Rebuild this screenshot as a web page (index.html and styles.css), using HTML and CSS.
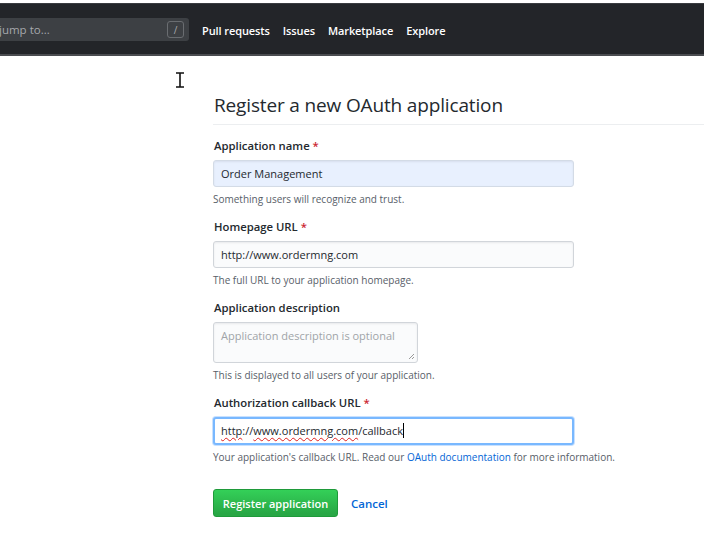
FILE: index.html
```html
<!DOCTYPE html>
<html lang="en">
<head>
<meta charset="utf-8">
<title>Register a new OAuth application</title>
<link rel="stylesheet" href="styles.css">
</head>
<body>
<header class="topbar">
  <div class="search">
    <span class="search-text">jump to...</span>
    <span class="slash">/</span>
  </div>
  <nav class="nav">
    <a class="nav-link">Pull requests</a>
    <a class="nav-link">Issues</a>
    <a class="nav-link">Marketplace</a>
    <a class="nav-link">Explore</a>
  </nav>
</header>

<svg class="ibeam" width="10" height="16" viewBox="0 0 10 16" aria-hidden="true">
  <path d="M1 1h8M5 1v14M1 15h8" stroke="#111" stroke-width="1.6" fill="none"/>
</svg>

<main class="page">
  <h1 class="title">Register a new OAuth application</h1>

  <div class="group">
    <label class="label">Application name <span class="req">*</span></label>
    <div class="field autofill">Order Management</div>
    <p class="note">Something users will recognize and trust.</p>
  </div>

  <div class="group">
    <label class="label">Homepage URL <span class="req">*</span></label>
    <div class="field">http://www.ordermng.com</div>
    <p class="note">The full URL to your application homepage.</p>
  </div>

  <div class="group">
    <label class="label">Application description</label>
    <div class="textarea"><span class="placeholder">Application description is optional</span>
      <svg class="grip" width="7" height="7" viewBox="0 0 7 7"><path d="M6 1L1 6M6 4L4 6" stroke="#999" stroke-width="1"/></svg>
    </div>
    <p class="note">This is displayed to all users of your application.</p>
  </div>

  <div class="group">
    <label class="label">Authorization callback URL <span class="req">*</span></label>
    <div class="field focus"><span class="spell">http</span>://<span class="spell">www.ordermng.com</span>/callback<span class="caret"></span></div>
    <p class="note">Your application's callback URL. Read our <a class="link">OAuth documentation</a> for more information.</p>
  </div>

  <div class="actions">
    <button class="btn">Register application</button>
    <a class="cancel">Cancel</a>
  </div>
</main>
</body>
</html>
```

FILE: styles.css
```css
* { box-sizing: border-box; }
html, body { margin: 0; padding: 0; background: #fff; }
body {
  font-family: "Open Sans", "Noto Sans", sans-serif;
  color: #24292e;
  width: 704px;
  height: 543px;
  overflow: hidden;
  position: relative;
}

.topbar {
  margin-top: 3px;
  height: 53px;
  background: #232529;
  border-bottom: 2px solid #4a4c50;
  border-top: 1px solid #3a3c40;
  display: flex;
  align-items: center;
}
.search {
  width: 189px;
  height: 23px;
  background: #3d4044;
  border-radius: 0 3px 3px 0;
  display: flex;
  align-items: center;
  justify-content: space-between;
  padding: 0 5px 0 0;
  margin-top: 1px;
}
.search-text {
  color: #a5a8ac;
  font-size: 11.5px;
  margin-left: -1px;
}
.slash {
  width: 17px;
  height: 17px;
  border: 1px solid #6a6d71;
  border-radius: 3px;
  color: #a5a8ac;
  font-size: 10px;
  display: flex;
  align-items: center;
  justify-content: center;
}
.nav {
  display: flex;
  gap: 13px;
  margin-left: 13px;
  margin-top: 2px;
}
.nav-link {
  color: #fff;
  font-weight: 600;
  font-size: 11px;
  letter-spacing: -0.1px;
}

.ibeam {
  position: absolute;
  left: 175px;
  top: 72px;
}

.page {
  margin-left: 213px;
  padding-top: 35px;
}
.title {
  font-weight: 400;
  font-size: 19px;
  line-height: 28px;
  margin: 0;
  padding: 0 0 5px 1px;
  border-bottom: 1px solid #eceef0;
  color: #24292e;
  letter-spacing: -0.15px;
}

.group { margin-top: 12px; }
.group + .group { margin-top: 10px; }
.label {
  display: block;
  font-weight: 600;
  font-size: 11.3px;
  line-height: 18px;
  padding-left: 1px;
  margin-bottom: 5px;
}
.req { color: #cb2431; }

.field {
  width: 361px;
  height: 27px;
  border: 1px solid #d1d5da;
  border-radius: 3px;
  background: #fafbfc;
  font-size: 11px;
  line-height: 25px;
  padding: 0 7px;
  color: #24292e;
  box-shadow: inset 0 1px 2px rgba(27,31,35,0.075);
}
.field.autofill { background: #e8f0fe; border-color: #d3dbe6; }
.field.focus {
  background: #fff;
  height: 28px;
  border: 2px solid #79b8ff;
  line-height: 24px;
  padding: 0 6px;
  box-shadow: 0 0 0 1px #c8e1ff;
}
.spell {
  text-decoration: underline wavy #e02020;
  text-decoration-thickness: 1px;
  text-underline-offset: 2px;
}
.caret {
  display: inline-block;
  width: 1px;
  height: 15px;
  background: #000;
  vertical-align: -3px;
}

.textarea {
  position: relative;
  width: 205px;
  height: 41px;
  border: 1px solid #d1d5da;
  border-radius: 3px;
  background: #fafbfc;
  padding: 5px 7px;
  font-size: 11px;
  white-space: nowrap;
  box-shadow: inset 0 1px 2px rgba(27,31,35,0.075);
}
.placeholder { color: #a0a4a8; }
.grip { position: absolute; right: 2px; bottom: 2px; }

.note {
  margin: 3px 0 0;
  font-size: 10px;
  line-height: 18px;
  color: #586069;
}
.link { color: #0366d6; }

.actions {
  margin-top: 23px;
  display: flex;
  align-items: center;
  gap: 13px;
}
.btn {
  width: 125px;
  height: 28px;
  border: 1px solid #1f9a3a;
  border-radius: 3px;
  background: linear-gradient(#34d058, #28a745 90%);
  color: #fff;
  font-family: inherit;
  font-weight: 600;
  font-size: 11px;
  padding: 0;
}
.cancel {
  color: #0366d6;
  font-size: 11.5px;
  font-weight: 600;
}
```
